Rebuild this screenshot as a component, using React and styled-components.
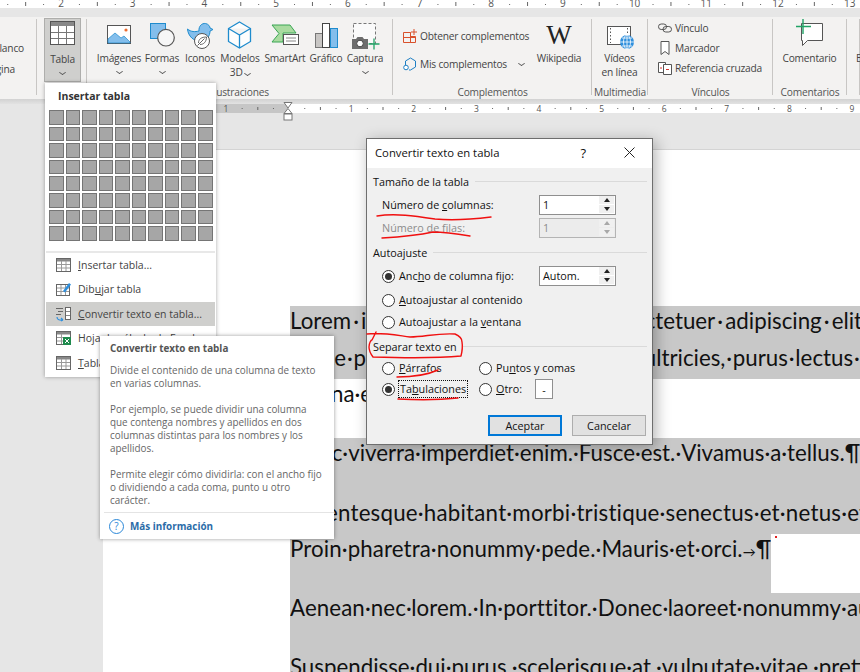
import React from "react";
import styled, { createGlobalStyle } from "styled-components";

const Global = createGlobalStyle`
  html, body { margin: 0; padding: 0; background: #e6e6e6; }
  body { font-family: "Open Sans", "Noto Sans", sans-serif; }
  * { box-sizing: border-box; }
  p { margin: 0; }
`;

const Page = styled.div`
  position: relative;
  width: 860px;
  height: 672px;
  overflow: hidden;
  background: #e6e6e6;
`;

/* ---------- rulers ---------- */

const RulerSvg = styled.svg`
  display: block;
  width: 860px;
  height: ${(p) => p.$h}px;
`;
const RulerNum = styled.text`
  font-family: "Open Sans", sans-serif;
  font-size: ${(p) => p.$size}px;
  fill: #555;
  text-anchor: middle;
`;

const Ticks = ({ first, start, pitch, count, size, base, dotY, tickY, tickH }) => {
  const out = [];
  for (let i = 0; i < count; i++) {
    const x = start + pitch * i;
    out.push(
      <RulerNum key={"n" + i} x={x} y={base} $size={size}>
        {Math.abs(first + i) || ""}
      </RulerNum>
    );
    out.push(<rect key={"h" + i} x={x + pitch / 2} y={tickY} width="1" height={tickH} fill="#666" />);
    out.push(<rect key={"a" + i} x={x + pitch / 4} y={dotY} width="1" height="1" fill="#666" />);
    out.push(<rect key={"b" + i} x={x + (pitch * 3) / 4} y={dotY} width="1" height="1" fill="#666" />);
  }
  return out;
};

const TopGap = styled.div`
  height: 9px;
  background: #e6e6e6;
`;
const RibbonShadow = styled.div`
  height: 5px;
  background: linear-gradient(#d2d2d2, #e2e2e2);
`;

/* ---------- ribbon ---------- */

const Ribbon = styled.div`
  display: flex;
  height: 82px;
  background: #f3f2f1;
  color: #444;
  font-size: 10.2px;
  letter-spacing: -0.2px;
`;
const Group = styled.div`
  display: grid;
  grid-template-rows: 68px 14px;
  flex: none;
  width: ${(p) => p.$w}px;
  background: linear-gradient(#c8c6c4, #c8c6c4) right 2px / 1px 76px no-repeat;
`;
const GroupBody = styled.div`
  display: flex;
  overflow: hidden;
  padding-left: ${(p) => p.$pl || 0}px;
`;
const GroupLabel = styled.div`
  line-height: 14px;
  text-align: center;
  white-space: nowrap;
  color: #555;
`;
const BigButton = styled.div`
  display: flex;
  flex-direction: column;
  align-items: center;
  flex: none;
  width: ${(p) => p.$w}px;
  padding-top: 3px;
  line-height: 14px;
  text-align: center;
  white-space: nowrap;
`;
const IconBox = styled.div`
  height: 28px;
  margin-bottom: 3px;
  display: flex;
  align-items: flex-start;
  justify-content: center;
`;
const Icon = styled.svg`
  display: block;
  overflow: visible;
  flex: none;
`;
const TableButton = styled(BigButton)`
  height: 64px;
  margin: 1px 0 0 7px;
  padding-top: 2px;
  background: #cfcfcd;
  border: 1px solid #aeaeac;
`;
const Chevron = styled.span`
  display: inline-block;
  width: 5px;
  height: 5px;
  margin: ${(p) => p.$m || "0"};
  border-right: 1px solid #555;
  border-bottom: 1px solid #555;
  transform: scale(1, 0.7) rotate(45deg);
`;
const ChevronLine = styled.div`
  height: 14px;
  line-height: 10px;
`;
const ClippedColumn = styled.div`
  display: flex;
  flex-direction: column;
  align-items: flex-end;
  width: 100%;
  padding-top: 24px;
  gap: 7px;
  white-space: nowrap;
`;
const ClippedRow = styled.div`
  line-height: 14px;
  margin-right: ${(p) => p.$mr}px;
`;
const ClippedLabel = styled.div`
  margin-top: 34px;
  line-height: 14px;
  white-space: nowrap;
`;
const SmallColumn = styled.div`
  display: flex;
  flex-direction: column;
  padding-top: ${(p) => p.$pt}px;
  gap: ${(p) => p.$gap}px;
  flex: none;
  width: ${(p) => p.$w}px;
`;
const SmallRow = styled.div`
  display: flex;
  align-items: center;
  gap: 3px;
  height: 14px;
  white-space: nowrap;
`;
const WikiW = styled.div`
  height: 28px;
  margin-bottom: 3px;
  padding-top: 4px;
  font-family: "Liberation Serif", serif;
  font-size: 27px;
  line-height: 22px;
  letter-spacing: 0;
  color: #222;
`;

/* ---------- document ---------- */

const DocPage = styled.div`
  margin: 36px 0 0 103px;
  height: 600px;
  padding: 156px 0 0 187px;
  background: #fff;
  border-top: 1px solid #d4d4d4;
`;
const DocLine = styled.div`
  height: ${(p) => p.$h}px;
  width: ${(p) => p.$w || 570}px;
  line-height: 29px;
  overflow: hidden;
  white-space: nowrap;
  font-family: Lato, "Noto Sans", sans-serif;
  font-size: 22.3px;
  letter-spacing: ${(p) => p.$ls || 0}px;
  color: #111;
  background: ${(p) => (p.$selected ? "#c8c8c8" : "transparent")};
`;
const WideDot = styled.span`
  padding: 0 ${(p) => p.$pad}px;
`;
const TabArrow = styled.span`
  font-size: 13px;
`;
const RedDot = styled.span`
  position: absolute;
  left: 775px;
  top: 536px;
  width: 2px;
  height: 2px;
  background: #e02020;
`;

/* justified lines in the document: the gaps between words are wider */
const Justified = ({ text, pad }) =>
  text.split("·").map((word, i) => (
    <React.Fragment key={i}>
      {i > 0 && <WideDot $pad={pad}>·</WideDot>}
      {word}
    </React.Fragment>
  ));

/* ---------- table menu ---------- */

const Menu = styled.div`
  position: absolute;
  left: 45px;
  top: 83px;
  width: 171px;
  height: 294px;
  padding: 0 1px;
  background: #fff;
  color: #444;
  box-shadow: 0 0 4px rgba(0, 0, 0, 0.35);
  font-size: 10.5px;
`;
const MenuTitle = styled.div`
  height: 27px;
  padding-left: 12px;
  line-height: 26px;
  font-weight: 700;
  color: #333;
`;
const CellGrid = styled.div`
  display: grid;
  grid-template-columns: repeat(10, 1fr);
  grid-auto-rows: 14.6px;
  gap: 2px;
  width: 163.5px;
  margin-left: 3px;
`;
const Cell = styled.div`
  background: #a6a6a6;
  border: 1.5px solid #757575;
`;
const MenuSep = styled.div`
  height: 2px;
  margin-top: 10px;
  background: #e8e8e8;
`;
const MenuItem = styled.div`
  display: flex;
  align-items: center;
  gap: 7px;
  height: 24.4px;
  padding-left: 10px;
  white-space: nowrap;
  background: ${(p) => (p.$active ? "#cfcfcd" : "transparent")};
`;

/* ---------- tooltip ---------- */

const Tooltip = styled.div`
  position: absolute;
  left: 100px;
  top: 336px;
  width: 234px;
  height: 203px;
  padding: 5px 0 0 4px;
  background: #fff;
  color: #666;
  font-size: 9.9px;
  line-height: 13px;
  box-shadow: 0 0 4px rgba(0, 0, 0, 0.4);
`;
const TipTitle = styled.div`
  padding-left: 6px;
  height: 14px;
  line-height: 14px;
  font-weight: 700;
  color: #555;
`;
const TipBody = styled.div`
  padding-left: 6px;
  margin-top: 9px;
  white-space: nowrap;
  display: flex;
  flex-direction: column;
  gap: 13px;
`;
const TipFoot = styled.div`
  display: flex;
  align-items: center;
  gap: 6px;
  height: 27px;
  margin-top: 5px;
  padding-left: 5px;
  border-top: 1px solid #e4e4e4;
  font-weight: 700;
  color: #2b6ca8;
`;
const HelpBadge = styled.span`
  display: flex;
  align-items: center;
  justify-content: center;
  width: 15px;
  height: 15px;
  border: 1px solid #2b88d8;
  border-radius: 50%;
  font-size: 10px;
  font-weight: 400;
  color: #2b88d8;
`;

/* ---------- dialog ---------- */

const Dialog = styled.div`
  position: absolute;
  left: 366px;
  top: 138px;
  width: 287px;
  height: 307px;
  background: #f0f0f0;
  border: 1px solid #6e6e6e;
  box-shadow: 3px 3px 14px rgba(0, 0, 0, 0.3);
  color: #111;
  font-size: 10.8px;
`;
const TitleBar = styled.div`
  display: flex;
  align-items: center;
  height: 29px;
  padding: 0 0 2px 8px;
  background: #fff;
  font-size: 11.3px;
`;
const TitleText = styled.div`
  flex: 1;
`;
const HelpMark = styled.div`
  font-size: 13px;
  margin-right: 38px;
`;
const CloseBox = styled.div`
  margin-right: 17px;
  height: 11px;
`;
const DialogBody = styled.div`
  padding: 0 5px 0 6px;
`;
const Heading = styled.div`
  display: flex;
  align-items: center;
  gap: 6px;
  height: 14px;
  padding-bottom: 1px;
  margin-top: ${(p) => p.$mt}px;
  white-space: nowrap;
  &::after {
    content: "";
    flex: 1;
    height: 1px;
    background: #dadada;
  }
`;
const FieldRow = styled.div`
  display: grid;
  grid-template-columns: ${(p) => p.$cols || "157px 77px"};
  align-items: center;
  height: 20px;
  margin-top: ${(p) => p.$mt}px;
  padding-left: 9px;
  white-space: nowrap;
  color: ${(p) => (p.$disabled ? "#8c8c8c" : "#111")};
  & > span,
  label > span {
    padding-bottom: 1px;
  }
`;
const Field = styled.div`
  display: flex;
  align-items: center;
  justify-content: space-between;
  height: 20px;
  padding: 0 1px 1px 3px;
  border: 1px solid ${(p) => (p.$disabled ? "#b4b4b4" : "#8f8f8f")};
  background: ${(p) => (p.$disabled ? "#ececec" : "#fff")};
`;
const SpinBox = styled.div`
  display: flex;
  flex-direction: column;
  gap: 1px;
  width: 15px;
`;
const Spin = styled.div`
  display: flex;
  align-items: center;
  justify-content: center;
  height: 8px;
  background: #f0f0f0;
  &::before {
    content: "";
    border-left: 3px solid transparent;
    border-right: 3px solid transparent;
    ${(p) => (p.$down ? "border-top" : "border-bottom")}: 4px solid ${(p) =>
      p.$disabled ? "#a8a8a8" : "#222"};
  }
`;
const RadioLine = styled.label`
  display: flex;
  align-items: center;
  gap: 4px;
`;
const RadioDot = styled.div`
  display: flex;
  align-items: center;
  justify-content: center;
  flex: none;
  width: 13px;
  height: 13px;
  border: 1px solid #333;
  border-radius: 50%;
  background: #fff;
  &::after {
    content: "";
    width: 7px;
    height: 7px;
    border-radius: 50%;
    background: ${(p) => (p.$on ? "#333" : "transparent")};
  }
`;
const Focused = styled.span`
  outline: 1px dotted #111;
  padding: 0 1px;
  line-height: 15px;
`;
const OtherField = styled.div`
  display: flex;
  align-items: center;
  justify-content: center;
  width: 18px;
  height: 20px;
  margin-left: 9px;
  background: #fff;
  border: 1px solid #8f8f8f;
`;
const ButtonRow = styled.div`
  display: flex;
  justify-content: flex-end;
  gap: 10px;
  margin-top: 16px;
  padding-right: 1px;
`;
const DialogButton = styled.div`
  display: flex;
  align-items: center;
  justify-content: center;
  width: 74px;
  height: 21px;
  padding-bottom: 1px;
  background: #e1e1e1;
  border: ${(p) => (p.$primary ? "2px solid #0078d7" : "1px solid #adadad")};
`;

/* hand drawn marker strokes on top of the dialog */
const Scribbles = styled.svg`
  position: absolute;
  left: 0;
  top: 0;
  width: 860px;
  height: 672px;
  pointer-events: none;
`;
const MarkerWrap = styled.svg`
  position: absolute;
  left: 283px;
  top: 101px;
`;

/* ---------- icons ---------- */

const BLUE = "#83beec";
const LINE = "#1e8bcd";

const TableIcon = () => (
  <Icon width="25" height="24" viewBox="0 0 25 24">
    <rect x=".5" y=".5" width="24" height="23" fill="#fff" stroke="#555" />
    <rect x="1" y="1" width="23" height="4" fill="#888" />
    <path d="M8.500 5v18M16.500 5v18M1 11.500h23M1 17.500h23" stroke="#777" fill="none" />
  </Icon>
);
const PictureIcon = () => (
  <Icon width="28" height="28" viewBox="0 0 28 28">
    <rect x="2.500" y="5.500" width="23" height="18" fill="#fff" stroke="#555" />
    <path d="M3 23v-4l7-6 6 5 3-2 6 6v1z" fill={BLUE} stroke={LINE} strokeWidth=".7" />
    <circle cx="21" cy="10" r="1.600" fill="#ed6c30" />
  </Icon>
);
const ShapesIcon = () => (
  <Icon width="28" height="28" viewBox="0 0 28 28">
    <rect x="2.500" y="3.500" width="15" height="15" fill={BLUE} stroke={LINE} />
    <circle cx="18" cy="17.700" r="8.300" fill="#f6f6f6" stroke="#555" strokeWidth="1.200" />
  </Icon>
);
const DuckIcon = () => (
  <Icon width="28" height="28" viewBox="0 0 28 28">
    <path
      d="M1.500 9C5 12 9 12 13 11c-.5-5 3-8 6.500-7.500 3 .5 4.500 3 4.500 4.500l3 1.500-3 1.500c0 5-3 9-9 10-7 1-13-5-13.500-12z"
      fill={BLUE}
      stroke={LINE}
    />
    <circle cx="16" cy="21" r="7.500" fill="#fff" stroke="#555" />
    <path d="M11.500 25.500l7-7M12.500 23c0-4 3-6 8-6 0 5-3 7.500-6.500 7.500" fill="none" stroke="#555" strokeWidth=".9" />
  </Icon>
);
const CubeIcon = () => (
  <Icon width="28" height="28" viewBox="0 0 28 28">
    <path d="M13.500 2L24.500 8.500V21.500L13.500 28 2.500 21.500V8.500zM2.500 8.500L13.500 15 24.500 8.500M13.500 15V28" fill="#fdfdfd" stroke={LINE} strokeWidth="1.300" />
  </Icon>
);
const SmartArtIcon = () => (
  <Icon width="28" height="28" viewBox="0 0 28 28">
    <path d="M1 5h18l6 8H12v9H1l7-8.500z" fill="#a9dba0" stroke="#3aa655" />
    <rect x="12.500" y="14.500" width="15" height="10" fill="#fff" stroke="#555" />
    <path d="M15 18h10M15 21h10" stroke="#888" />
  </Icon>
);
const ChartIcon = () => (
  <Icon width="28" height="28" viewBox="0 0 28 28">
    <rect x="3.500" y="13.500" width="7" height="14" fill="#c8c6c4" stroke="#777" />
    <rect x="10.500" y="3.500" width="7" height="24" fill="#fff" stroke="#444" />
    <rect x="18.500" y="8.500" width="7" height="19" fill={BLUE} stroke={LINE} />
  </Icon>
);
const ScreenshotIcon = () => (
  <Icon width="28" height="28" viewBox="0 0 28 28">
    <rect x="2.500" y="3.500" width="22" height="20" fill="#fafafa" stroke="#777" strokeDasharray="3 2" />
    <path d="M1 19h4l1.500-2h5l1.500 2h4v10H1z" fill="#6d6d6d" />
    <circle cx="9" cy="23.500" r="3.300" fill="#fff" stroke="#444" />
    <path d="M23 18.500v11M17.500 24h11" stroke="#21a366" strokeWidth="1.300" />
  </Icon>
);
const StoreIcon = () => (
  <Icon width="14" height="14" viewBox="0 0 14 14">
    <path d="M.5 3.500h7v10h-7zM7.500 7.500h5v6h-5zM.5 8.500h12M7.500 3.500v10" fill="none" stroke="#d9512c" />
    <path d="M11 0v6M8 3h6" stroke="#d9512c" />
  </Icon>
);
const AddinIcon = () => (
  <Icon width="14" height="14" viewBox="0 0 14 14">
    <path d="M2.500 8V4L7.500 1l5 3v6l-5 3H6" fill="none" stroke="#1e7fc4" />
    <circle cx="3" cy="10.500" r="2.300" fill="#fff" stroke="#1e7fc4" />
  </Icon>
);
const VideoIcon = () => (
  <Icon width="28" height="28" viewBox="0 0 28 28">
    <rect x="1.500" y="6.500" width="23" height="18" fill="#fff" stroke="#555" />
    <path d="M4.500 8v15M21.500 8v15" stroke="#555" strokeDasharray="1.500 2" fill="none" />
    <circle cx="21" cy="22" r="7" fill="#2e8fdd" />
    <path d="M14 22h14M21 15v14M16 18h10M16 26h10" stroke="#fff" strokeWidth=".8" />
    <ellipse cx="21" cy="22" rx="3.500" ry="7" fill="none" stroke="#fff" strokeWidth=".8" />
  </Icon>
);
const LinkIcon = () => (
  <Icon width="14" height="14" viewBox="0 0 14 14">
    <rect x=".5" y="3" width="8" height="5.500" rx="2.700" fill="none" stroke="#555" />
    <rect x="5" y="5.500" width="8.500" height="5.500" rx="2.700" fill="none" stroke="#555" />
  </Icon>
);
const BookmarkIcon = () => (
  <Icon width="14" height="14" viewBox="0 0 14 14">
    <path d="M3 .5h8v13L7 10.500 3 13.500z" fill="#fff" stroke="#555" />
  </Icon>
);
const CrossRefIcon = () => (
  <Icon width="14" height="14" viewBox="0 0 14 14">
    <path d="M.5 1.500h7v10h-7z" fill="#fff" stroke="#555" />
    <path d="M5.500 3.500h8v10h-8z" fill="#fff" stroke="#555" />
    <path d="M2 7h2M8 8.500h3" stroke="#d9312c" />
  </Icon>
);
const CommentIcon = () => (
  <Icon width="28" height="28" viewBox="0 0 28 28">
    <path d="M5.500 3.500h21v17H11.500l-5 5v-5h-1z" fill="#fff" stroke="#555" />
    <path d="M7 -1v15M0 6.500h15" stroke="#21a366" strokeWidth="1.400" />
  </Icon>
);
const SmallTable = () => (
  <Icon width="15" height="14" viewBox="0 0 15 14">
    <rect x=".5" y=".5" width="14" height="13" fill="#fff" stroke="#666" />
    <rect x="1" y="1" width="13" height="2.500" fill="#888" />
    <path d="M5.500 3v10M10 3v10M1 6.500h13M1 10h13" stroke="#999" />
  </Icon>
);
const DrawTable = () => (
  <Icon width="15" height="14" viewBox="0 0 15 14">
    <rect x=".5" y="2.500" width="13" height="11" fill="#fff" stroke="#666" />
    <path d="M5 3v10M9.500 3v10M1 6h12M1 9.500h12" stroke="#999" />
    <path d="M7 9l6-8 2 1.500-6 8z" fill="#2e8fdd" />
  </Icon>
);
const ConvertIcon = () => (
  <Icon width="15" height="14" viewBox="0 0 15 14">
    <path d="M0 1.500h7M2 4.500h5M0 7.500h5" stroke="#666" />
    <rect x="9.500" y=".5" width="5" height="12" fill="#fff" stroke="#666" />
    <path d="M10 4.500h4M10 8.500h4" stroke="#888" />
    <path d="M1 10c0 3 3 3.500 6 3M7 13l-2-2M7 13l-2 1" fill="none" stroke="#2e8fdd" strokeWidth="1.200" />
  </Icon>
);
const ExcelIcon = () => (
  <Icon width="15" height="14" viewBox="0 0 15 14">
    <rect x=".5" y=".5" width="14" height="13" fill="#fff" stroke="#666" />
    <rect x="1" y="1" width="13" height="2.500" fill="#888" />
    <path d="M5.500 3v10M1 6.500h7M1 10h7" stroke="#999" />
    <rect x="7" y="6" width="8" height="8" fill="#1f8a4d" />
    <path d="M9 8l4 4M13 8l-4 4" stroke="#fff" />
  </Icon>
);

const ribbonIcons = [
  { w: 48, icon: <PictureIcon />, label: "Imágenes", drop: true },
  { w: 38, icon: <ShapesIcon />, label: "Formas", drop: true },
  { w: 38, icon: <DuckIcon />, label: "Iconos" },
  { w: 42, icon: <CubeIcon />, label: "Modelos", second: "3D" },
  { w: 48, icon: <SmartArtIcon />, label: "SmartArt" },
  { w: 34, icon: <ChartIcon />, label: "Gráfico" },
  { w: 44, icon: <ScreenshotIcon />, label: "Captura", drop: true },
];

const menuItems = [
  { icon: <SmallTable />, text: <><u>I</u>nsertar tabla...</> },
  { icon: <DrawTable />, text: <>Dib<u>u</u>jar tabla</> },
  { icon: <ConvertIcon />, text: <><u>C</u>onvertir texto en tabla...</>, active: true },
  { icon: <ExcelIcon />, text: <>Hoja de cálculo de Excel</> },
  { icon: <SmallTable />, text: <><u>T</u>ablas rápidas</> },
];

const Spinner = ({ disabled }) => (
  <SpinBox>
    <Spin $disabled={disabled} />
    <Spin $down $disabled={disabled} />
  </SpinBox>
);

export default function App() {
  const pitchTop = 71.7;
  const pitchBottom = 62.6;
  return (
    <Page>
      <Global />
      <RulerSvg $h={8} viewBox="0 0 860 8">
        <rect width="860" height="8" fill="#fff" />
        <Ticks first={1} start={61 - pitchTop} pitch={pitchTop} count={14} size={10} base={7} dotY={4} tickY={2} tickH={4} />
      </RulerSvg>
      <TopGap />
      <Ribbon>
        <Group $w={37}>
          <GroupBody>
            <ClippedColumn>
              <ClippedRow $mr={13}>Página en blanco</ClippedRow>
              <ClippedRow $mr={22}>Salto de página</ClippedRow>
            </ClippedColumn>
          </GroupBody>
        </Group>
        <Group $w={50}>
          <GroupBody>
            <TableButton $w={37}>
              <IconBox>
                <TableIcon />
              </IconBox>
              <span>Tabla</span>
              <ChevronLine>
                <Chevron />
              </ChevronLine>
            </TableButton>
          </GroupBody>
        </Group>
        <Group $w={306}>
          <GroupBody $pl={8}>
            {ribbonIcons.map((b) => (
              <BigButton key={b.label} $w={b.w}>
                <IconBox>{b.icon}</IconBox>
                <span>{b.label}</span>
                {b.drop && (
                  <ChevronLine>
                    <Chevron />
                  </ChevronLine>
                )}
                {b.second && (
                  <span>
                    {b.second} <Chevron />
                  </span>
                )}
              </BigButton>
            ))}
          </GroupBody>
          <GroupLabel>Ilustraciones</GroupLabel>
        </Group>
        <Group $w={199}>
          <GroupBody $pl={10}>
            <SmallColumn $w={131} $pt={12} $gap={14}>
              <SmallRow>
                <StoreIcon />
                Obtener complementos
              </SmallRow>
              <SmallRow>
                <AddinIcon />
                Mis complementos
                <Chevron $m="0 0 2px 9px" />
              </SmallRow>
            </SmallColumn>
            <BigButton $w={50}>
              <WikiW>W</WikiW>
              <span>Wikipedia</span>
            </BigButton>
          </GroupBody>
          <GroupLabel>Complementos</GroupLabel>
        </Group>
        <Group $w={56}>
          <GroupBody>
            <BigButton $w={55}>
              <IconBox>
                <VideoIcon />
              </IconBox>
              <span>Vídeos</span>
              <span>en línea</span>
            </BigButton>
          </GroupBody>
          <GroupLabel>Multimedia</GroupLabel>
        </Group>
        <Group $w={125}>
          <GroupBody $pl={10}>
            <SmallColumn $w={114} $pt={4} $gap={6}>
              <SmallRow>
                <LinkIcon />
                Vínculo
              </SmallRow>
              <SmallRow>
                <BookmarkIcon />
                Marcador
              </SmallRow>
              <SmallRow>
                <CrossRefIcon />
                Referencia cruzada
              </SmallRow>
            </SmallColumn>
          </GroupBody>
          <GroupLabel>Vínculos</GroupLabel>
        </Group>
        <Group $w={74}>
          <GroupBody>
            <BigButton $w={73}>
              <IconBox>
                <CommentIcon />
              </IconBox>
              <span>Comentario</span>
            </BigButton>
          </GroupBody>
          <GroupLabel>Comentarios</GroupLabel>
        </Group>
        <Group $w={13}>
          <GroupBody $pl={9}>
            <ClippedLabel>Ecuación</ClippedLabel>
          </GroupBody>
        </Group>
      </Ribbon>
      <RibbonShadow />
      <RulerSvg $h={9} viewBox="0 0 860 9">
        <rect x="103" width="757" height="9" fill="#fff" />
        <rect x="103" width="185" height="9" fill="#c6c6c6" />
        <Ticks first={-1} start={226} pitch={pitchBottom} count={11} size={8.5} base={7.5} dotY={4} tickY={3} tickH={3} />
      </RulerSvg>
      <DocPage>
        <DocLine $h={37} $selected>
          <Justified text="Lorem·ipsum·dolor·sit·amet,·consectetuer·adipiscing·elit.·Maecenas" pad={2.1} />
        </DocLine>
        <DocLine $h={36} $selected>
          <Justified text="Fusce·posuere,·magna·sed·pulvinar·ultricies,·purus·lectus·malesuada" pad={0.8} />
        </DocLine>
        <DocLine $h={59}>magna·eros·quis·urna.¶</DocLine>
        <DocLine $h={60} $selected>Nunc·viverra·imperdiet·enim.·Fusce·est.·Vivamus·a·tellus.¶</DocLine>
        <DocLine $h={36} $ls={0.22} $selected>Pellentesque·habitant·morbi·tristique·senectus·et·netus·et·malesuada</DocLine>
        <DocLine $h={59} $w={481} $ls={0.1} $selected>Proin·pharetra·nonummy·pede.·Mauris·et·orci.<TabArrow>→</TabArrow>¶</DocLine>
        <DocLine $h={59} $ls={0.1} $selected>Aenean·nec·lorem.·In·porttitor.·Donec·laoreet·nonummy·augue.¶</DocLine>
        <DocLine $h={40} $selected>Suspendisse·dui·purus,·scelerisque·at,·vulputate·vitae,·pretium·mattis</DocLine>
      </DocPage>
      <RedDot />

      <Menu>
        <MenuTitle>Insertar tabla</MenuTitle>
        <CellGrid>
          {Array.from({ length: 80 }, (_, i) => (
            <Cell key={i} />
          ))}
        </CellGrid>
        <MenuSep />
        {menuItems.map((m, i) => (
          <MenuItem key={i} $active={m.active}>
            {m.icon}
            <span>{m.text}</span>
          </MenuItem>
        ))}
      </Menu>

      <Tooltip>
        <TipTitle>Convertir texto en tabla</TipTitle>
        <TipBody>
          <p>
            Divide el contenido de una columna de texto
            <br />
            en varias columnas.
          </p>
          <p>
            Por ejemplo, se puede dividir una columna
            <br />
            que contenga nombres y apellidos en dos
            <br />
            columnas distintas para los nombres y los
            <br />
            apellidos.
          </p>
          <p>
            Permite elegir cómo dividirla: con el ancho fijo
            <br />
            o dividiendo a cada coma, punto u otro
            <br />
            carácter.
          </p>
        </TipBody>
        <TipFoot>
          <HelpBadge>?</HelpBadge>
          Más información
        </TipFoot>
      </Tooltip>

      <Dialog>
        <TitleBar>
          <TitleText>Convertir texto en tabla</TitleText>
          <HelpMark>?</HelpMark>
          <CloseBox>
            <Icon width="11" height="11" viewBox="0 0 11 11">
              <path d="M.5.5l10 10M10.500.5l-10 10" stroke="#222" />
            </Icon>
          </CloseBox>
        </TitleBar>
        <DialogBody>
          <Heading $mt={7}>Tamaño de la tabla</Heading>
          <FieldRow $mt={6}>
            <span>Número de <u>c</u>olumnas:</span>
            <Field>
              1
              <Spinner />
            </Field>
          </FieldRow>
          <FieldRow $mt={3} $disabled>
            <span>Número de filas:</span>
            <Field $disabled>
              1
              <Spinner disabled />
            </Field>
          </FieldRow>
          <Heading $mt={8}>Autoajuste</Heading>
          <FieldRow $mt={6}>
            <RadioLine>
              <RadioDot $on />
              <span>Anc<u>h</u>o de columna fijo:</span>
            </RadioLine>
            <Field>
              Autom.
              <Spinner />
            </Field>
          </FieldRow>
          <FieldRow $mt={4}>
            <RadioLine>
              <RadioDot />
              <span><u>A</u>utoajustar al contenido</span>
            </RadioLine>
          </FieldRow>
          <FieldRow $mt={2}>
            <RadioLine>
              <RadioDot />
              <span>Autoajustar a la <u>v</u>entana</span>
            </RadioLine>
          </FieldRow>
          <Heading $mt={8}>Separar texto en</Heading>
          <FieldRow $mt={4} $cols="97px 1fr">
            <RadioLine>
              <RadioDot />
              <span><u>P</u>árrafos</span>
            </RadioLine>
            <RadioLine>
              <RadioDot />
              <span>Pu<u>n</u>tos y comas</span>
            </RadioLine>
          </FieldRow>
          <FieldRow $mt={1} $cols="97px 1fr">
            <RadioLine>
              <RadioDot $on />
              <Focused>Ta<u>b</u>ulaciones</Focused>
            </RadioLine>
            <RadioLine>
              <RadioDot />
              <span><u>O</u>tro:</span>
              <OtherField>-</OtherField>
            </RadioLine>
          </FieldRow>
          <ButtonRow>
            <DialogButton $primary>Aceptar</DialogButton>
            <DialogButton>Cancelar</DialogButton>
          </ButtonRow>
        </DialogBody>
      </Dialog>

      <Scribbles viewBox="0 0 860 672">
        <g fill="none" stroke="#f01010" strokeWidth="1.400" strokeLinecap="round" strokeLinejoin="round">
          <path d="M377 216C395 213 415 216 435 219C455 221 475 219 491 217" />
          <path d="M382 238C400 237 415 236 433 232C445 232 458 234 470 236" />
          <path d="M367 334C380 332 395 335 410 337C425 337 435 333 455 334C460 336 462 339 462 342C463 348 462 352 461 356C440 358 405 358 373 357C370 353 369 350 369 347C369 343 371 340 372 340L376 332" />
          <path d="M397 377C410 377 425 376 438 370" />
          <path d="M398 399C415 400 440 400 458 398" />
        </g>
      </Scribbles>
      <MarkerWrap width="10" height="20" viewBox="0 0 10 20">
        <path d="M1 1.500h8L5 7zM5 7.500l4 5H1z" fill="#fff" stroke="#777" />
        <rect x="1" y="13" width="8" height="6" fill="#fff" stroke="#777" />
      </MarkerWrap>
    </Page>
  );
}
